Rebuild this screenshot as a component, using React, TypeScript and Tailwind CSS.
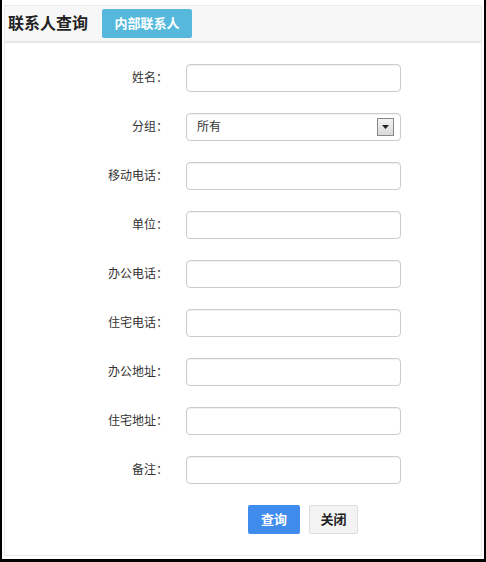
import React from "react";

const font = { fontFamily: '"Liberation Sans", "Noto Sans CJK SC", sans-serif' };

const fields = ["姓名", "分组", "移动电话", "单位", "办公电话", "住宅电话", "办公地址", "住宅地址", "备注"];

function Field({ label }: { label: string }) {
  return (
    <div className="flex h-[28px] items-center">
      <label className="w-[163px] shrink-0 text-right text-[12px] text-[#333]">{label}：</label>
      {label === "分组" ? (
        <div className="ml-[18px] flex h-[28px] w-[215px] items-center justify-between rounded-[4px] border border-[#ccc] bg-white pr-[6px] pl-[10px] shadow-[inset_0_1px_1px_rgba(0,0,0,0.06)]">
          <span className="text-[12px] text-[#333]">所有</span>
          <span className="flex h-[18px] w-[17px] items-center justify-center border border-[#888] bg-gradient-to-b from-[#f4f4f4] to-[#d8d8d8]">
            <svg width="7" height="4" viewBox="0 0 7 4">
              <path d="M0 0h7L3.5 4z" fill="#222" />
            </svg>
          </span>
        </div>
      ) : (
        <input
          className="ml-[18px] h-[28px] w-[215px] rounded-[4px] border border-[#ccc] bg-white shadow-[inset_0_1px_1px_rgba(0,0,0,0.06)] outline-none"
          type="text"
        />
      )}
    </div>
  );
}

export default function App() {
  return (
    <div
      className="h-[562px] w-[486px] overflow-hidden border-r-2 border-b-[3px] border-l-2 border-black bg-white"
      style={font}
    >
      <div className="mx-[2px] mt-[5px] h-[551px] border border-[#ececec]">
        <div className="flex h-[37px] items-center gap-[14px] border-b-2 border-[#e6e6e6] bg-[#f7f7f7] pl-[3px]">
          <h1 className="text-[16px] font-bold text-[#222]">联系人查询</h1>
          <button className="h-[29px] w-[90px] rounded-[2px] bg-[#56b9dc] text-[13px] font-bold text-white">
            内部联系人
          </button>
        </div>
        <div className="flex flex-col gap-[21px] pt-[21px]">
          {fields.map((f) => (
            <Field key={f} label={f} />
          ))}
          <div className="flex gap-[9px] pl-[243px]">
            <button className="h-[29px] w-[52px] rounded-[2px] bg-[#3f8ced] text-[13px] font-bold text-white">
              查询
            </button>
            <button className="h-[29px] w-[49px] rounded-[2px] border border-[#ddd] bg-[#f3f3f3] text-[13px] font-bold text-[#222]">
              关闭
            </button>
          </div>
        </div>
      </div>
    </div>
  );
}
